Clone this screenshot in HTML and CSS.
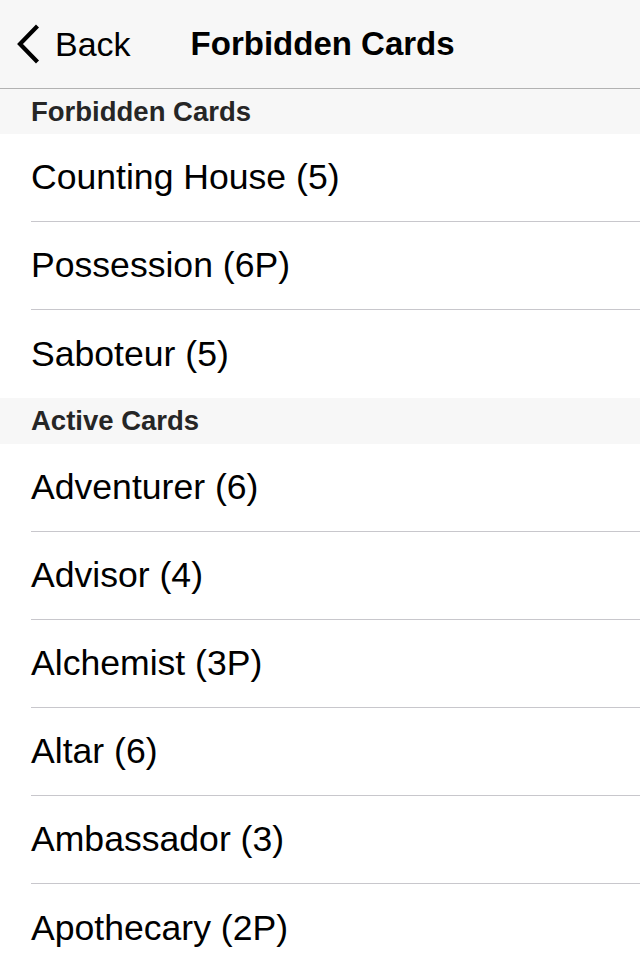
FILE: index.html
```html
<!DOCTYPE html>
<html>
<head>
<meta charset="utf-8">
<link rel="stylesheet" href="styles.css">
</head>
<body>
<div class="navbar">
  <a class="back">
    <svg class="chevron" width="26" height="40" viewBox="0 0 26 40"><path d="M22.5 2 L5 20 L22.5 38" fill="none" stroke="#000" stroke-width="4.2"/></svg>
    <span class="back-label">Back</span>
  </a>
  <div class="title">Forbidden Cards</div>
</div>
<div class="section-header">Forbidden Cards</div>
<ul class="list">
  <li class="row">Counting House (5)</li>
  <li class="row">Possession (6P)</li>
  <li class="row">Saboteur (5)</li>
</ul>
<div class="section-header section-header--tall">Active Cards</div>
<ul class="list">
  <li class="row">Adventurer (6)</li>
  <li class="row">Advisor (4)</li>
  <li class="row">Alchemist (3P)</li>
  <li class="row">Altar (6)</li>
  <li class="row">Ambassador (3)</li>
  <li class="row">Apothecary (2P)</li>
</ul>
</body>
</html>
```
FILE: styles.css
```css
html, body {
  margin: 0;
  padding: 0;
  background: #fff;
  font-family: "Liberation Sans", Arial, sans-serif;
  color: #000;
  overflow: hidden;
  height: 960px;
}

.navbar {
  height: 89px;
  box-sizing: border-box;
  background: #f7f7f7;
  border-bottom: 1px solid #b2b2b2;
  display: flex;
  align-items: center;
}

.back {
  display: flex;
  align-items: center;
  padding-left: 15px;
}

.chevron {
  display: block;
}

.back-label {
  font-size: 34px;
  margin-left: 14px;
}

.title {
  font-size: 33px;
  font-weight: bold;
  margin-left: 60px;
}

.section-header {
  height: 45px;
  background: #f7f7f7;
  color: #262626;
  font-size: 27.5px;
  font-weight: bold;
  padding-left: 31px;
  display: flex;
  align-items: center;
}

.section-header--tall {
  height: 46px;
}

.list {
  list-style: none;
  margin: 0;
  padding: 0 0 0 31px;
}

.row {
  height: 88px;
  font-size: 35.6px;
  display: flex;
  align-items: center;
  box-sizing: border-box;
  border-bottom: 1px solid #c8c7cc;
}

.row:last-child {
  border-bottom: none;
}
```
